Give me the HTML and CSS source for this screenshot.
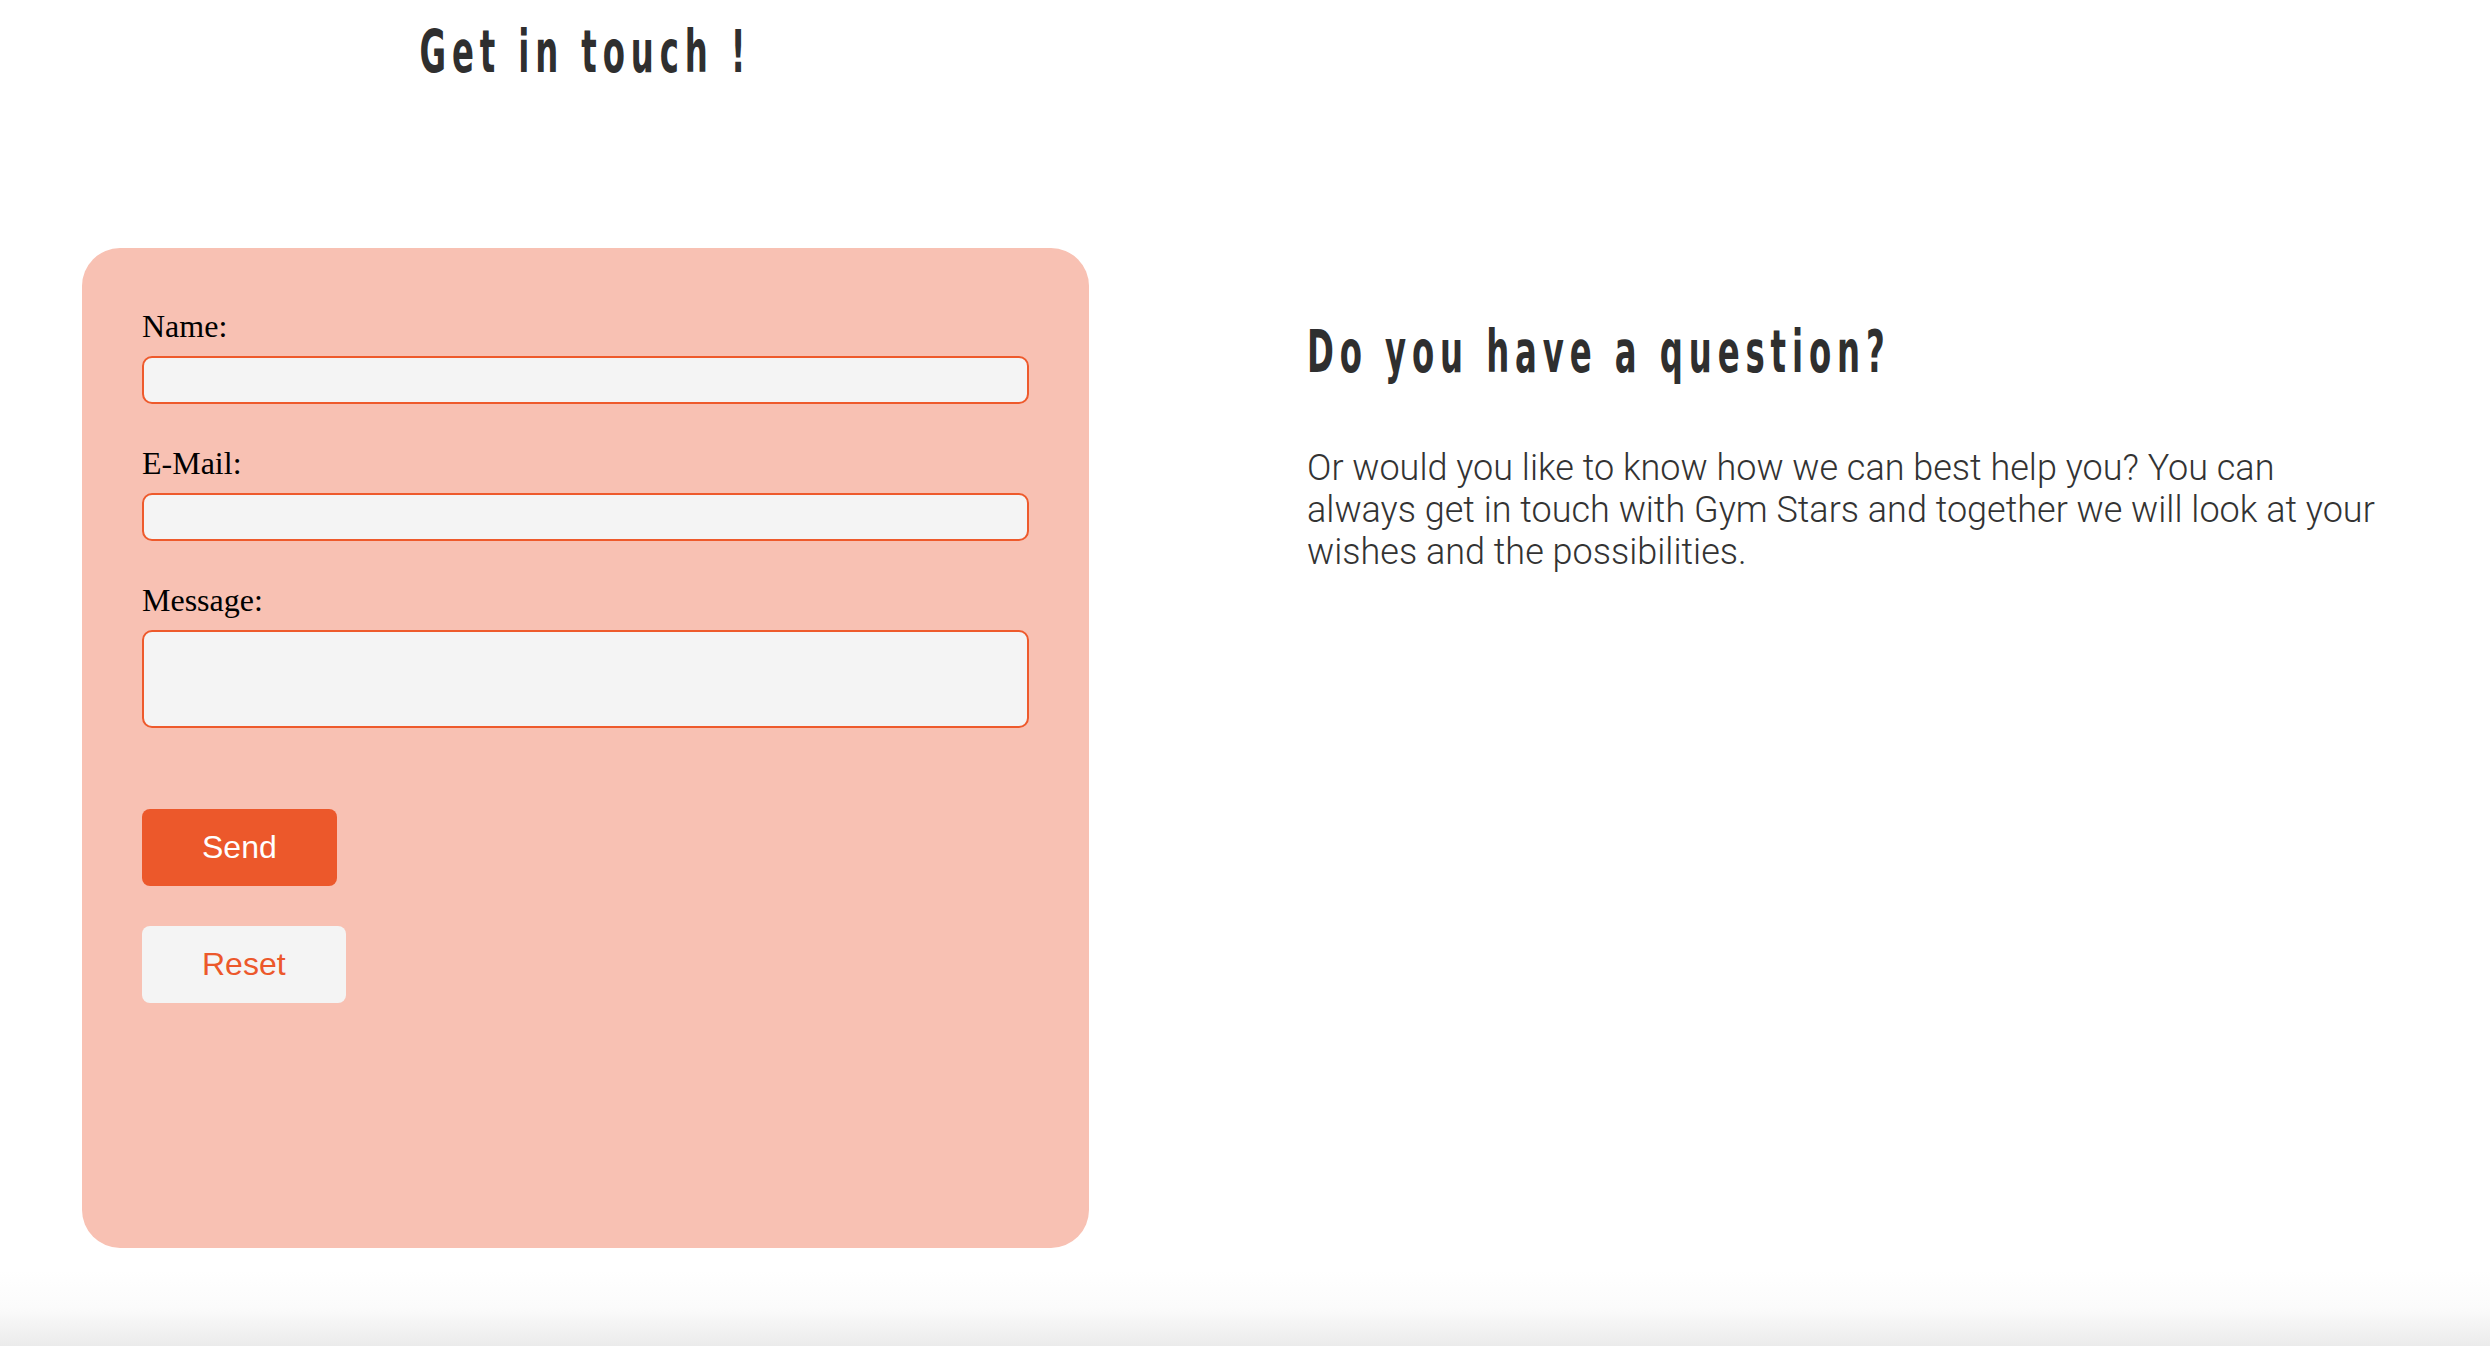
FILE: index.html
```html
<!DOCTYPE html>
<html lang="en">
<head>
<meta charset="utf-8">
<title>Contact - Gym Stars</title>
<link rel="stylesheet" href="styles.css">
</head>
<body>
<main class="contact">
  <section class="contact-left">
    <h1 class="title title-center">Get in touch !</h1>
    <form class="card">
      <label class="field-label" for="name">Name:</label>
      <input class="field" id="name" type="text">
      <label class="field-label" for="email">E-Mail:</label>
      <input class="field" id="email" type="email">
      <label class="field-label" for="message">Message:</label>
      <textarea class="field field-area" id="message"></textarea>
      <div class="actions">
        <button class="btn btn-send" type="submit">Send</button>
        <button class="btn btn-reset" type="reset">Reset</button>
      </div>
    </form>
  </section>
  <section class="contact-right">
    <h2 class="title title-left">Do you have a question?</h2>
    <p class="intro">Or would you like to know how we can best help you? You can<br>always get in touch with Gym Stars and together we will look at your wishes and the possibilities.</p>
  </section>
</main>
<div class="page-fade"></div>
</body>
</html>
```

FILE: styles.css
```css
html, body {
  margin: 0;
  padding: 0;
  background: #ffffff;
}

body {
  width: 2490px;
  height: 1346px;
  overflow: hidden;
}

.contact {
  display: flex;
  align-items: flex-start;
  padding-left: 82px;
  gap: 218px;
}

.contact-left {
  width: 1007px;
  display: flex;
  flex-direction: column;
}

.title {
  margin: 0;
  font-family: "DejaVu Sans Condensed", "DejaVu Sans", sans-serif;
  font-stretch: condensed;
  font-weight: 700;
  font-size: 58px;
  line-height: 58px;
  letter-spacing: 9.5px;
  color: #2f2f2f;
  transform: scaleX(0.62);
}

.title-center {
  text-align: center;
  transform-origin: 50% 50%;
  padding-top: 23px;
  margin-bottom: 167px;
}

.title-left {
  transform-origin: 0 50%;
  white-space: nowrap;
}

.card {
  box-sizing: border-box;
  height: 1000px;
  background: #f8c1b3;
  border-radius: 38px;
  padding: 60px 60px 0 60px;
  display: flex;
  flex-direction: column;
  align-items: flex-start;
}

.field-label {
  display: block;
  font-family: "Liberation Serif", "Times New Roman", serif;
  font-size: 32px;
  line-height: 37px;
  color: #000000;
  margin-bottom: 11px;
}

.field {
  box-sizing: border-box;
  width: 887px;
  height: 48px;
  margin: 0 0 41px 0;
  background: #f4f4f4;
  border: 2px solid #ee5a2c;
  border-radius: 10px;
  font-family: "Liberation Sans", Arial, sans-serif;
  font-size: 24px;
  padding: 4px 12px;
  outline: none;
}

.field-area {
  height: 98px;
  resize: none;
  margin-bottom: 81px;
}

.actions {
  display: flex;
  flex-direction: column;
  align-items: flex-start;
  gap: 40px;
}

.btn {
  box-sizing: border-box;
  height: 77px;
  padding: 0 60px;
  border: none;
  border-radius: 8px;
  font-family: "Liberation Sans", Arial, sans-serif;
  font-size: 32px;
  line-height: 37px;
  cursor: pointer;
}

.btn-send {
  background: #ec582b;
  color: #ffffff;
}

.btn-reset {
  background: #f4f4f4;
  color: #ec582b;
}

.contact-right {
  padding-top: 323px;
  width: 1120px;
}

.intro {
  margin: 66px 0 0 0;
  max-width: 1120px;
  font-family: Roboto, "Liberation Sans", sans-serif;
  font-weight: 300;
  font-size: 36px;
  line-height: 42px;
  color: #333333;
}

.page-fade {
  margin-top: 22px;
  height: 76px;
  background: linear-gradient(to bottom, #ffffff 0%, #fbfbfb 50%, #ebebeb 100%);
}
```
